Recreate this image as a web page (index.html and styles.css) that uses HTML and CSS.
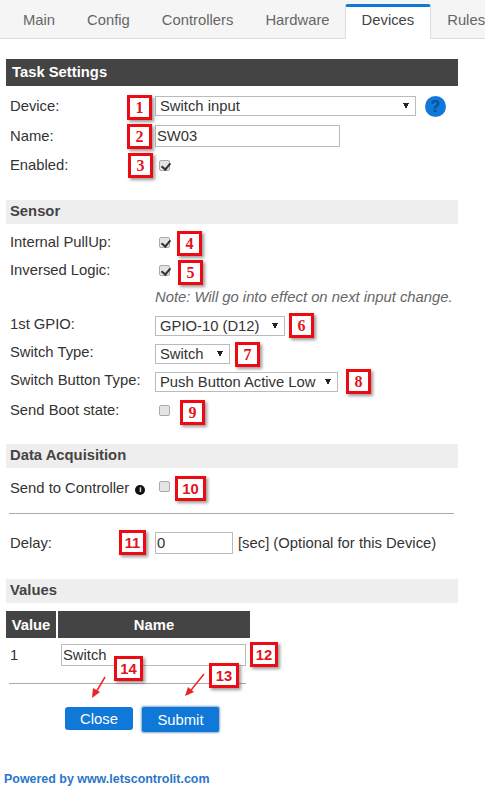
FILE: index.html
```html
<!DOCTYPE html>
<html lang="en">
<head>
    <meta charset="UTF-8">
    <meta name="viewport" content="width=device-width, initial-scale=1.0">
    <title>Devices</title>
    <link rel="stylesheet" href="styles.css">
</head>
<body>
    <nav class="tabs">
        <a class="tab">Main</a>
        <a class="tab">Config</a>
        <a class="tab">Controllers</a>
        <a class="tab">Hardware</a>
        <a class="tab active">Devices</a>
        <a class="tab">Rules</a>
    </nav>

    <form class="content">
        <h2 class="head dark">Task Settings</h2>
        <div class="rows first">
            <div class="row tall">
                <label>Device:</label>
                <select class="sel sel-device"><option>Switch input</option></select>
                <span class="help">?</span>
            </div>
            <div class="row tall">
                <label>Name:</label>
                <input type="text" class="txt txt-name" value="SW03">
            </div>
            <div class="row">
                <label>Enabled:</label>
                <input type="checkbox" class="chk" checked>
            </div>
        </div>

        <h3 class="head light">Sensor</h3>
        <div class="rows">
            <div class="row">
                <label>Internal PullUp:</label>
                <input type="checkbox" class="chk" checked>
            </div>
            <div class="row">
                <label>Inversed Logic:</label>
                <input type="checkbox" class="chk" checked>
            </div>
            <div class="row">
                <label></label>
                <em class="note">Note: Will go into effect on next input change.</em>
            </div>
            <div class="row with-sel">
                <label>1st GPIO:</label>
                <select class="sel sel-gpio"><option>GPIO-10 (D12)</option></select>
            </div>
            <div class="row with-sel">
                <label>Switch Type:</label>
                <select class="sel sel-type"><option>Switch</option></select>
            </div>
            <div class="row with-sel">
                <label>Switch Button Type:</label>
                <select class="sel sel-button"><option>Push Button Active Low</option></select>
            </div>
            <div class="row">
                <label>Send Boot state:</label>
                <input type="checkbox" class="chk">
            </div>
        </div>

        <h3 class="head light">Data Acquisition</h3>
        <div class="rows">
            <div class="row send">
                <label>Send to Controller <span class="info">i</span></label>
                <input type="checkbox" class="chk">
            </div>
        </div>
        <hr class="rule rule-wide">
        <div class="row delay">
            <label>Delay:</label>
            <input type="text" class="txt txt-delay" value="0">
            <span class="unit">[sec] (Optional for this Device)</span>
        </div>

        <h3 class="head light values-head">Values</h3>
        <table class="values">
            <tr>
                <th class="col-value">Value</th>
                <th class="col-name">Name</th>
            </tr>
            <tr>
                <td>1</td>
                <td><input type="text" class="txt txt-value" value="Switch"></td>
            </tr>
        </table>
        <hr class="rule rule-short">

        <div class="buttons">
            <button type="button" class="btn">Close</button>
            <button type="button" class="btn btn-focus">Submit</button>
        </div>
    </form>

    <footer class="footer">Powered by www.letscontrolit.com</footer>

    <div class="notes">
        <span class="mark m1">1</span>
        <span class="mark m2">2</span>
        <span class="mark m3">3</span>
        <span class="mark m4">4</span>
        <span class="mark m5">5</span>
        <span class="mark m6">6</span>
        <span class="mark m7">7</span>
        <span class="mark m8">8</span>
        <span class="mark m9">9</span>
        <span class="mark wide m10">10</span>
        <span class="mark wide m11">11</span>
        <span class="mark wide m12">12</span>
        <span class="mark wide m13">13</span>
        <span class="mark wide m14">14</span>
        <svg class="arrows" width="485" height="803" viewBox="0 0 485 803">
            <g fill="none" stroke="#e8262a" stroke-width="1.5">
                <path d="M105 677L95 694"/>
                <path d="M204 674L188 694"/>
            </g>
            <g fill="#e8262a">
                <path d="M92 698L93 688L100 692Z"/>
                <path d="M185 696L188 687L194 692Z"/>
            </g>
        </svg>
    </div>
</body>
</html>
```

FILE: styles.css
```css
* {
    box-sizing: border-box;
}
html, body {
    height: 803px;
    overflow: hidden;
}
body {
    margin: 0;
    position: relative;
    font-family: "Liberation Sans", Arial, sans-serif;
    font-size: 14.8px;
    color: #333;
    background-color: white;
}

/* tabs */
.tabs {
    display: flex;
    height: 39px;
    padding-left: 7px;
    background-color: #f5f5f5;
    border-bottom: 1px solid #ddd;
    white-space: nowrap;
}
.tab {
    padding: 12px 16px 0;
    color: #666;
}
.tab.active {
    margin-top: 4px;
    margin-left: -1px;
    padding: 5px 16px 0;
    height: 35px;
    background-color: white;
    color: #444;
    border-top: 3px solid #0f78d8;
    border-left: 1px solid #ddd;
    border-right: 1px solid #ddd;
    border-radius: 3px 3px 0 0;
}

/* section headers */
.content {
    padding: 20px 27px 0 6px;
}
.head {
    margin: 0;
    font-size: 14.8px;
    font-weight: bold;
    padding-left: 6px;
}
.head.dark {
    height: 27px;
    line-height: 26px;
    background-color: #444;
    color: white;
}
.head.light {
    height: 24px;
    line-height: 23px;
    margin-top: 20px;
    padding-left: 4px;
    background-color: #eee;
    color: #444;
}
.head.values-head {
    margin-top: 21px;
}

/* form rows */
.rows {
    padding-top: 4px;
}
.rows.first {
    padding-top: 5px;
    padding-bottom: 1px;
}
.row {
    display: flex;
    align-items: center;
    height: 28px;
}
.row.tall {
    height: 30px;
}
.row label {
    flex: 0 0 149px;
    padding-left: 4px;
    white-space: nowrap;
}
.row.with-sel label {
    margin-bottom: 4px;
}
.row.send {
    margin-top: 2px;
}
.row.send .chk {
    margin-top: -4px;
}
.note {
    margin-bottom: 2px;
    color: #666;
    white-space: nowrap;
}
.delay {
    height: 30px;
}
.unit {
    margin-left: 5px;
    white-space: nowrap;
}

/* inputs */
.sel {
    appearance: none;
    height: 20px;
    padding: 0 0 0 4px;
    font-family: inherit;
    font-size: 14.8px;
    color: #333;
    border: 1px solid #bbb;
    border-radius: 0;
    background-color: white;
    background-image: linear-gradient(to top left, transparent 50%, #222 50%), linear-gradient(to top right, transparent 50%, #222 50%);
    background-size: 3px 6px;
    background-repeat: no-repeat;
    background-position: right 6px center, right 9px center;
}
.sel-device {
    width: 261px;
}
.sel-gpio {
    width: 130px;
}
.sel-type {
    width: 75px;
}
.sel-button {
    width: 183px;
}
.txt {
    height: 22px;
    padding: 0 1px;
    font-family: inherit;
    font-size: 14.8px;
    color: #333;
    border: 1px solid #bbb;
    border-radius: 0;
}
.txt-name {
    width: 185px;
}
.txt-delay {
    width: 78px;
}
.txt-value {
    width: 185px;
}
.chk {
    appearance: none;
    position: relative;
    width: 11px;
    height: 11px;
    margin: 0 0 0 4px;
    background-color: #e4e4e4;
    border: 1px solid #aaa;
    border-radius: 2px;
}
.chk:checked::after {
    content: "";
    position: absolute;
    left: 3px;
    top: 0;
    width: 4px;
    height: 7px;
    border: solid #333;
    border-width: 0 2px 2px 0;
    transform: rotate(40deg);
}

/* little round icons */
.help {
    width: 21px;
    height: 21px;
    margin-left: 9px;
    border-radius: 50%;
    background-color: #0f78d8;
    color: #0a4f96;
    font-weight: bold;
    font-size: 16px;
    line-height: 21px;
    text-align: center;
}
.info {
    display: inline-block;
    width: 10px;
    height: 10px;
    margin-left: 2px;
    border-radius: 50%;
    background-color: #111;
    color: white;
    font-size: 8px;
    font-weight: bold;
    line-height: 10px;
    text-align: center;
    vertical-align: 1px;
}

.rule {
    height: 1px;
    margin: 0;
    border: none;
    background-color: #aaa;
}
.rule-wide {
    margin: 11px 4px 14px 3px;
}
.rule-short {
    width: 237px;
    margin: 11px 0 0 3px;
}

/* values table */
.values {
    margin-top: 8px;
    border-collapse: collapse;
}
.values th {
    height: 27px;
    padding: 0;
    background-color: #444;
    color: white;
    font-size: 14.8px;
    border-right: 2px solid white;
}
.values th:last-child {
    border-right: none;
}
.col-value {
    width: 51px;
}
.col-name {
    width: 193px;
}
.values td {
    height: 34px;
    padding: 0 0 0 4px;
    vertical-align: middle;
}

.buttons {
    display: flex;
    align-items: flex-start;
    gap: 9px;
    margin: 23px 0 0 59px;
}
.btn {
    height: 23px;
    padding: 0;
    width: 68px;
    font-family: inherit;
    font-size: 14.8px;
    color: white;
    background-color: #0f78d8;
    border: none;
    border-radius: 3px;
}
.btn-focus {
    width: 77px;
    height: 25px;
    border-radius: 2px;
    box-shadow: 0 0 2px 1px rgba(60, 110, 160, 0.6);
}

.footer {
    margin-top: 40px;
    padding-left: 4px;
    color: #2a76c8;
    font-size: 12.45px;
    font-weight: bold;
}

/* red numbered marks drawn over the page */
.notes {
    position: absolute;
    inset: 0;
}
.arrows {
    position: absolute;
    left: 0;
    top: 0;
}
.mark {
    position: absolute;
    display: flex;
    align-items: center;
    justify-content: center;
    width: 25px;
    height: 25px;
    background-color: white;
    border: 3px solid #ee0a12;
    box-shadow: 2px 2px 3px rgba(0, 0, 0, 0.4);
    color: #e3141c;
    font-family: "Liberation Serif", serif;
    font-size: 16px;
    font-weight: bold;
}
.mark.wide {
    font-family: "Liberation Sans", sans-serif;
    font-size: 14.8px;
}
.m1 { left: 127px; top: 95px; }
.m2 { left: 127px; top: 124px; }
.m3 { left: 128px; top: 153px; }
.m4 { left: 177px; top: 231px; }
.m5 { left: 178px; top: 260px; }
.m6 { left: 289px; top: 313px; }
.m7 { left: 235px; top: 342px; }
.m8 { left: 346px; top: 369px; }
.m9 { left: 180px; top: 400px; }
.m10 { left: 175px; top: 476px; width: 31px; }
.m11 { left: 119px; top: 530px; width: 27px; }
.m12 { left: 250px; top: 642px; width: 28px; }
.m13 { left: 209px; top: 663px; width: 30px; }
.m14 { left: 114px; top: 656px; width: 29px; }
```
